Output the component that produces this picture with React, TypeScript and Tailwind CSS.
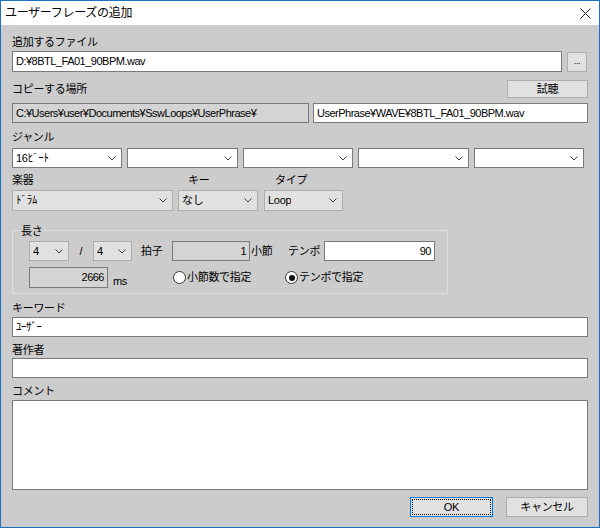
import React from 'react';

const Chevron: React.FC = () => (
  <svg width="8" height="5" viewBox="0 0 8 5" className="shrink-0">
    <polyline points="0.5,0.5 4,4 7.5,0.5" fill="none" stroke="#404040" strokeWidth="1" />
  </svg>
);

const Combo: React.FC<{ value?: string; className: string; flat?: boolean }> = ({ value = '', className, flat }) => (
  <div
    className={`flex items-center justify-between pl-[3px] pr-[5px] border ${
      flat ? 'bg-[#e1e1e1] border-[#adadad]' : 'bg-white border-[#7a7a7a]'
    } ${className}`}
  >
    <span className="truncate">{value}</span>
    <Chevron />
  </div>
);

const Edit: React.FC<{ value?: string; className: string; readOnly?: boolean; right?: boolean }> = ({
  value = '',
  className,
  readOnly,
  right,
}) => (
  <div
    className={`flex items-center px-[3px] border border-[#7a7a7a] whitespace-nowrap overflow-hidden tracking-[-0.5px] ${
      readOnly ? 'bg-[#d4d4d4]' : 'bg-white'
    } ${right ? 'justify-end' : ''} ${className}`}
  >
    {value}
  </div>
);

const Button: React.FC<{ label: string; className: string; focused?: boolean }> = ({ label, className, focused }) => (
  <div
    className={`flex items-center justify-center bg-[#e1e1e1] border ${
      focused ? 'border-[#0078d7] p-[1px]' : 'border-[#adadad]'
    } ${className}`}
  >
    {focused ? (
      <div className="w-full h-full flex items-center justify-center border border-dotted border-black">{label}</div>
    ) : (
      label
    )}
  </div>
);

const Radio: React.FC<{ label: string; checked?: boolean; className?: string }> = ({ label, checked, className = '' }) => (
  <div className={`flex items-center ${className}`}>
    <div className="w-[13px] h-[13px] rounded-full border border-[#333333] bg-white flex items-center justify-center">
      {checked && <div className="w-[6px] h-[6px] rounded-full bg-[#111111]" />}
    </div>
    <span className="ml-[1px]">{label}</span>
  </div>
);

export default function App() {
  return (
    <div className="w-[600px] h-[528px] border border-[#1a73c1] bg-[#cccccc] flex flex-col overflow-hidden text-[11px] leading-none tracking-[-0.3px] text-black font-['Liberation_Sans','Noto_Sans_CJK_JP',sans-serif]">
      {/* title bar */}
      <div className="h-[24px] shrink-0 bg-white flex items-center justify-between pl-[4px] pr-[8px]">
        <span className="text-[12px]">ユーザーフレーズの追加</span>
        <svg width="11" height="11" viewBox="0 0 11 11">
          <path d="M0.5 0.5 L10.5 10.5 M10.5 0.5 L0.5 10.5" stroke="#222" strokeWidth="1" />
        </svg>
      </div>

      <div className="flex flex-col pl-[11px] w-[587px]">
        <div className="mt-[10px] h-[14px] flex items-center">追加するファイル</div>
        <div className="mt-[2px] flex items-center">
          <Edit value="D:¥8BTL_FA01_90BPM.wav" className="w-[550px] h-[21px]" />
          <Button label="..." className="ml-[5px] w-[20px] h-[20px] text-[9px]" />
        </div>

        <div className="mt-[8px] h-[18px] flex items-center justify-between">
          <span>コピーする場所</span>
          <Button label="試聴" className="w-[81px] h-[18px]" />
        </div>
        <div className="mt-[5px] flex">
          <Edit value="C:¥Users¥user¥Documents¥SswLoops¥UserPhrase¥" readOnly className="w-[297px] h-[20px]" />
          <Edit value="UserPhrase¥WAVE¥8BTL_FA01_90BPM.wav" className="ml-[4px] flex-1 h-[20px]" />
        </div>

        <div className="mt-[7px] h-[14px] flex items-center">ジャンル</div>
        <div className="mt-[4px] grid grid-cols-5 gap-[5px] w-[572px]">
          <Combo value="16ﾋﾞｰﾄ" className="h-[20px]" />
          <Combo className="h-[20px]" />
          <Combo className="h-[20px]" />
          <Combo className="h-[20px]" />
          <Combo className="h-[20px]" />
        </div>

        <div className="mt-[5px] h-[14px] flex items-center">
          <span className="w-[176px]">楽器</span>
          <span className="w-[87px]">キー</span>
          <span>タイプ</span>
        </div>
        <div className="mt-[3px] flex">
          <Combo value="ﾄﾞﾗﾑ" flat className="w-[161px] h-[21px]" />
          <Combo value="なし" flat className="ml-[5px] w-[80px] h-[21px]" />
          <Combo value="Loop" flat className="ml-[6px] w-[79px] h-[21px]" />
        </div>

        {/* 長さ group */}
        <div className="relative mt-[19px] w-[436px] h-[64px] border border-[#dedede] flex flex-col pl-[16px]">
          <span className="absolute left-[7px] top-[-7px] px-[1px] bg-[#cccccc] h-[14px] flex items-center">長さ</span>
          <div className="mt-[10px] h-[20px] flex items-center">
            <Combo value="4" flat className="w-[40px] h-[20px]" />
            <span className="w-[24px] text-center">/</span>
            <Combo value="4" flat className="w-[39px] h-[20px]" />
            <span className="ml-[9px] w-[31px]">拍子</span>
            <Edit value="1" readOnly right className="w-[78px] h-[20px]" />
            <span className="ml-[1px] w-[37px]">小節</span>
            <span className="w-[36px]">テンポ</span>
            <Edit value="90" right className="w-[111px] h-[20px]" />
          </div>
          <div className="mt-[6px] h-[21px] flex">
            <Edit value="2666" readOnly right className="w-[79px] h-[21px]" />
            <span className="ml-[5px] w-[60px] self-end pb-[1px]">ms</span>
            <Radio label="小節数で指定" className="w-[112px]" />
            <Radio label="テンポで指定" checked />
          </div>
        </div>

        <div className="mt-[7px] h-[14px] flex items-center">キーワード</div>
        <Edit value="ﾕｰｻﾞｰ" className="mt-[2px] w-[576px] h-[20px]" />
        <div className="mt-[6px] h-[14px] flex items-center">著作者</div>
        <Edit className="mt-[1px] w-[576px] h-[20px]" />
        <div className="mt-[6px] h-[14px] flex items-center">コメント</div>
        <div className="mt-[2px] w-[576px] h-[90px] bg-white border border-[#7a7a7a]" />

        <div className="mt-[7px] flex justify-end w-[576px]">
          <Button label="OK" focused className="w-[83px] h-[20px]" />
          <Button label="キャンセル" className="ml-[13px] w-[82px] h-[20px]" />
        </div>
      </div>
    </div>
  );
}
